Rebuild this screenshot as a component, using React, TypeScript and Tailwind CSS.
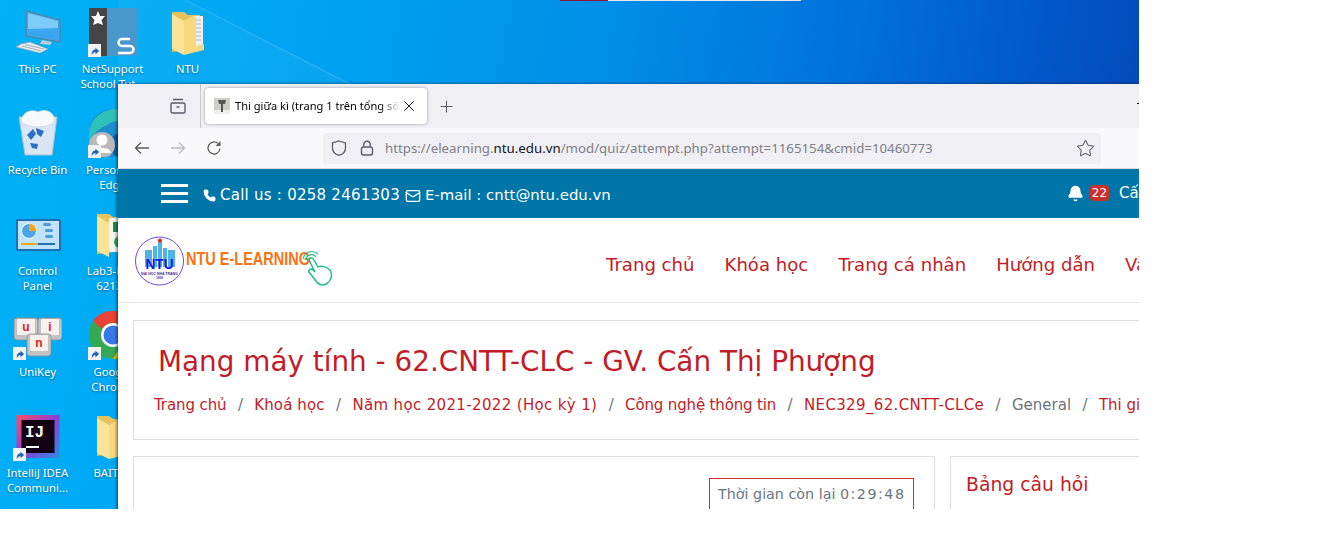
import type { ReactNode } from "react";
import { Bell, Mail, Phone, Star, X, Plus } from "lucide-react";

const sysFont = "font-['Noto_Sans','Open_Sans',sans-serif]";
const siteFont = "font-['DejaVu_Sans',Verdana,sans-serif]";

function Shortcut() {
  return (
    <svg viewBox="0 0 14 14" className="absolute left-[-1px] bottom-[-1px] w-[13px] h-[13px]">
      <rect width="14" height="14" fill="#f0f2f4" />
      <path d="M4 12 C4 8 5 6 8 6 L8 4 L12 7.5 L8 11 L8 8.5 C6.500 8.500 5.500 9.500 4 12Z" fill="#1f62b5" />
    </svg>
  );
}

function Folder() {
  return (
    <svg viewBox="0 0 48 48" className="w-12 h-12">
      <path d="M8 4 L20 4 L24 7 L36 7 L36 40 L8 44Z" fill="#e6c25c" />
      <rect x="29" y="8" width="10" height="34" fill="#eef0ee" />
      <path d="M31 12 h6 M31 16 h6 M31 20 h6 M31 24 h6 M31 28 h6 M31 32 h6" stroke="#a9b8c4" strokeWidth="1.200" />
      <path d="M8 6 L20 13 L20 47 L8 41Z" fill="#fbe296" />
      <path d="M20 13 L27 9 L32 9 L32 38 L40 36 L40 42 L20 47Z" fill="#f8d97f" />
    </svg>
  );
}

function ThisPcIcon() {
  return (
    <svg viewBox="0 0 48 48" className="w-12 h-12">
      <path d="M12 3 L46 12 L46 34 L12 28Z" fill="#3aa6f0" stroke="#6a7a86" strokeWidth="1" />
      <path d="M14 5 L44 13 L44 20 L14 21Z" fill="#7fcbf8" />
      <path d="M28 32 L38 34 L36 37 L26 36Z" fill="#c2cad0" />
      <path d="M16 34 L34 41 L26 45 L2 39 L7 36Z" fill="#e8ebee" stroke="#97a1a8" strokeWidth="0.600" />
      <path d="M8 38 L27 43 M11 36.500 L30 41" stroke="#97a1a8" strokeWidth="0.800" />
    </svg>
  );
}

function NetSupportIcon() {
  return (
    <svg viewBox="0 0 48 48" className="w-12 h-12">
      <rect x="0" y="0" width="18" height="48" fill="#454545" />
      <rect x="18" y="0" width="30" height="48" fill="#4a97cc" />
      <path d="M9 3 L11 8 L16 8 L12.500 12 L14 17 L9 15 L4 17 L5.500 12 L2 8 L7 8Z" fill="#fff" />
      <path d="M41 31 H33 a3.500 3.500 0 0 0 0 7 H41 a3.500 3.500 0 0 1 0 7 H29" fill="none" stroke="#fff" strokeWidth="2.500" />
    </svg>
  );
}

function BinIcon() {
  return (
    <svg viewBox="0 0 48 48" className="w-12 h-12">
      <path d="M5 8 L43 8 L38 46 L11 46Z" fill="#d7e6f2" stroke="#aebfcc" strokeWidth="1" />
      <path d="M7 12 C9 2 18 0 24 3 C32 -1 40 3 41 12 C34 20 14 20 7 12Z" fill="#f7f8f9" stroke="#d0d6da" strokeWidth="0.800" />
      <path d="M13 26 L19 20 L22 25 L17 31Z M22 19 L30 22 L27 28 L23 25Z M16 34 L24 35 L23 40 L18 39Z" fill="#2a6fc4" />
    </svg>
  );
}

function EdgeIcon() {
  return (
    <svg viewBox="0 0 48 48" className="w-12 h-12">
      <circle cx="24" cy="24" r="24" fill="#1b8ecb" />
      <path d="M0 24 C2 6 18 0 26 0 C40 0 48 12 48 22 C40 10 26 10 18 16 C10 20 4 24 0 34Z" fill="#2fc1b8" />
      <circle cx="34" cy="36" r="13" fill="#0b5ea8" />
      <circle cx="13" cy="36" r="13" fill="#b9b9b9" />
      <circle cx="13" cy="31" r="5.500" fill="#fff" />
      <path d="M4 44 C5 37 21 37 22 44 Z" fill="#fff" />
    </svg>
  );
}

function LabFolder() {
  return (
    <svg viewBox="0 0 48 48" className="w-12 h-12">
      <path d="M8 4 L20 4 L24 7 L42 7 L42 40 L8 44Z" fill="#e6c25c" />
      <rect x="20" y="8" width="24" height="34" fill="#f4f5ef" />
      <rect x="24" y="12" width="10" height="10" fill="#1e8e4e" />
      <rect x="25" y="26" width="12" height="12" rx="6" fill="#3aa655" />
      <path d="M8 6 L20 13 L20 47 L8 41Z" fill="#fbe296" />
    </svg>
  );
}

function ControlPanelIcon() {
  return (
    <svg viewBox="0 0 48 48" className="w-12 h-12">
      <rect x="2" y="9" width="45" height="32" rx="1.500" fill="#1f6fb5" />
      <rect x="4" y="11" width="41" height="28" fill="#bfe3f8" />
      <circle cx="15" cy="21" r="7.500" fill="#4aa6e8" stroke="#fff" />
      <path d="M15 13.500 A7.500 7.500 0 0 1 22.500 21 L15 21Z" fill="#f5a623" />
      <rect x="29" y="13" width="8" height="3" rx="1.500" fill="#4f9ad8" />
      <rect x="31" y="19" width="8" height="3" rx="1.500" fill="#4f9ad8" />
      <rect x="31" y="25" width="8" height="3" rx="1.500" fill="#4f9ad8" />
      <rect x="7" y="33" width="17" height="2" fill="#f5a623" />
      <rect x="24" y="33" width="17" height="2" fill="#1f6fb5" />
    </svg>
  );
}

function UniKeyIcon() {
  const key = (x: number, y: number, c: string) => (
    <g>
      <rect x={x} y={y} width="24" height="22" rx="3" fill="#c2c2c2" stroke="#8a8a8a" strokeWidth="0.700" />
      <rect x={x + 3} y={y + 1} width="18" height="16" rx="1" fill="#f6f0ee" />
      <text x={x + 12} y={y + 13} textAnchor="middle" fontSize="12" fontWeight="700" fontFamily="Liberation Sans" fill="#e02020">{c}</text>
    </g>
  );
  return (
    <svg viewBox="0 0 48 48" className="w-12 h-12">
      {key(0, 7, "u")}
      {key(24, 7, "i")}
      {key(13, 23, "n")}
    </svg>
  );
}

function ChromeIcon() {
  return (
    <svg viewBox="0 0 48 48" className="w-12 h-12">
      <circle cx="24" cy="24" r="24" fill="#34a853" />
      <path d="M24 0 A24 24 0 0 1 45 12 L24 12 A12 12 0 0 0 13 18 L4 10 A24 24 0 0 1 24 0Z" fill="#ea4335" />
      <path d="M45 12 A24 24 0 0 1 24 48 L35 30 A12 12 0 0 0 34 14Z" fill="#fbbc05" />
      <circle cx="24" cy="24" r="12" fill="#fff" />
      <circle cx="24" cy="24" r="9.500" fill="#3b78e7" />
    </svg>
  );
}

function IntellijIcon() {
  return (
    <svg viewBox="0 0 48 48" className="w-12 h-12">
      <defs>
        <linearGradient id="ijg" x1="0" y1="0" x2="1" y2="1">
          <stop offset="0" stopColor="#ff4d5e" />
          <stop offset="0.500" stopColor="#8a3fd8" />
          <stop offset="1" stopColor="#2f8de0" />
        </linearGradient>
      </defs>
      <rect x="2.500" y="3" width="43" height="43" fill="url(#ijg)" />
      <rect x="7.500" y="8" width="33" height="33" fill="#120214" />
      <text x="11" y="25" fontSize="16" fontWeight="700" fontFamily="Liberation Mono" fill="#fff">IJ</text>
      <rect x="12" y="34" width="13" height="2" fill="#fff" />
    </svg>
  );
}

function DesktopIcon({ label, icon, shortcut }: { label: string; icon: ReactNode; shortcut?: boolean }) {
  return (
    <div className="flex flex-col items-center pt-2">
      <div className="relative w-12 h-12">
        {icon}
        {shortcut && <Shortcut />}
      </div>
      <div className={`${sysFont} mt-[5px] w-[68px] text-center text-[11.300px] leading-[15px] text-white [text-shadow:0_1px_2px_rgba(0,0,0,0.45)]`}>
        {label}
      </div>
    </div>
  );
}

function Logo() {
  return (
    <svg viewBox="0 0 200 52" className="w-[200px] h-[52px]">
      <circle cx="24.500" cy="25" r="24" fill="#fff" stroke="#7048e8" strokeWidth="1" />
      <rect x="10" y="14" width="7" height="17" fill="#4fb3e8" />
      <rect x="18" y="10" width="4" height="21" fill="#4fb3e8" />
      <rect x="23" y="6" width="4" height="25" fill="#4fb3e8" />
      <rect x="28" y="12" width="4" height="19" fill="#4fb3e8" />
      <rect x="33" y="14" width="7" height="17" fill="#4fb3e8" />
      <path d="M25 1.500 l1 2 2 0 -1.500 1.500 .5 2 -2 -1 -2 1 .5 -2 -1.500 -1.500 2 0Z" fill="#e02020" />
      <text x="24.500" y="33" textAnchor="middle" fontSize="14" fontWeight="700" fontFamily="Liberation Sans" fill="#1a1ad8" textLength="28" lengthAdjust="spacingAndGlyphs">NTU</text>
      <text x="24.500" y="38.500" textAnchor="middle" fontSize="3.500" fontWeight="700" fontFamily="Liberation Sans" fill="#3a2aa0">ĐẠI HỌC NHA TRANG</text>
      <text x="24.500" y="43" textAnchor="middle" fontSize="3" fontWeight="700" fontFamily="Liberation Sans" fill="#3a2aa0">1959</text>
      <text x="51" y="29" fontSize="19" fontWeight="700" fontFamily="Liberation Sans" fill="#f97316" textLength="124" lengthAdjust="spacingAndGlyphs">NTU E-LEARNING</text>
      <path d="M174 24 C174 21 178 21 179 24 L183 31 C186 29 192 31 195 34 C198 39 196 45 192 47.500 C188 50 184 49 181 45 L174 36 C173 34 176 32 178 34 L180 36 Z" fill="#fff" stroke="#1fbf8f" strokeWidth="1.500" />
      <path d="M171 24 A5.500 5.500 0 0 1 181 21" fill="none" stroke="#1fbf8f" strokeWidth="1.200" />
      <path d="M168 23 A9 9 0 0 1 183 18" fill="none" stroke="#1fbf8f" strokeWidth="1.200" />
    </svg>
  );
}

const navItems = ["Trang chủ", "Khóa học", "Trang cá nhân", "Hướng dẫn", "Vài"];
const crumbs = [
  { text: "Trang chủ", cls: "tracking-[-0.1px]" },
  { text: "Khoá học", cls: "tracking-[0.1px]" },
  { text: "Năm học 2021-2022 (Học kỳ 1)", cls: "tracking-[0.35px]" },
  { text: "Công nghệ thông tin", cls: "tracking-[-0.15px]" },
  { text: "NEC329_62.CNTT-CLCe", cls: "tracking-[0.35px]" },
  { text: "General", cls: "text-[#6c757d]" },
  { text: "Thi giữa kì", cls: "" },
];

function BrowserWindow() {
  return (
    <div className="absolute left-[118px] top-[84px] w-[1240px] h-[470px] flex flex-col bg-white shadow-[-1px_0_3px_rgba(0,0,0,0.6)]">
      {/* tab strip */}
      <div className="relative h-11 flex items-center bg-[#f0f0f4] shrink-0">
        <div className="w-[83px] h-11 flex items-center justify-end pr-[14px] border-r border-[#c8c8cc]">
          <svg viewBox="0 0 16 16" className="w-4 h-4" fill="none" stroke="#5b5b66" strokeWidth="1.400">
            <rect x="1" y="5" width="14" height="10" rx="1.500" />
            <path d="M3 1.500 H13 M6.500 9 H9.500" />
          </svg>
        </div>
        <div className={`${sysFont} ml-[4px] w-[222px] h-9 flex items-center pl-[9px] bg-white rounded shadow-[0_0_3px_rgba(0,0,0,0.4)]`}>
          <svg viewBox="0 0 16 16" className="w-4 h-4 shrink-0">
            <rect width="16" height="16" fill="#cfcfca" />
            <rect y="12" width="16" height="4" fill="#eeeeea" />
            <path d="M4 2 H12 L11 6 H9 V14 H7 V6 H5Z" fill="#555" />
          </svg>
          <div className="ml-[5px] w-[165px] overflow-hidden whitespace-nowrap text-[11.100px] text-black [mask-image:linear-gradient(to_right,black_88%,transparent)]">
            Thi giữa kì (trang 1 trên tổng số 1)
          </div>
          <X className="w-[18px] h-[18px] text-[#15141a]" strokeWidth={1.300} />
        </div>
        <Plus className="ml-[10px] w-[19px] h-[19px] text-[#5b5b66]" strokeWidth={1.300} />
        <div className="absolute left-[1019px] top-[19px] w-[10px] h-px bg-[#15141a]" />
      </div>
      {/* address bar */}
      <div className="h-[41px] flex items-center bg-[#f9f9fb] border-b border-[#d8d8dc] shrink-0 pl-[16px]">
        <svg viewBox="0 0 16 16" className="w-4 h-4" fill="none" stroke="#5b5b66" strokeWidth="1.300">
          <path d="M1.500 8 H15 M7 2.500 L1.500 8 L7 13.500" />
        </svg>
        <svg viewBox="0 0 16 16" className="ml-[20px] w-4 h-4" fill="none" stroke="#b8b8be" strokeWidth="1.300">
          <path d="M14.500 8 H1 M9 2.500 L14.500 8 L9 13.500" />
        </svg>
        <svg viewBox="0 0 16 16" className="ml-[20px] w-4 h-4" fill="none" stroke="#5b5b66" strokeWidth="1.300">
          <path d="M14 8.500 A6 6 0 1 1 11.800 3.300" />
          <path d="M14.500 1 V6 H9.500Z" fill="#5b5b66" stroke="none" />
        </svg>
        <div className="ml-[101px] w-[778px] h-[31px] flex items-center pl-[8px] rounded bg-[#f0f0f4]">
          <svg viewBox="0 0 16 16" className="w-4 h-4" fill="none" stroke="#5b5b66" strokeWidth="1.300">
            <path d="M8 1 L14.500 3 V8 C14.500 12 11 14.500 8 15.300 C5 14.500 1.500 12 1.500 8 V3Z" />
          </svg>
          <svg viewBox="0 0 16 16" className="ml-[12px] w-4 h-4" fill="none" stroke="#5b5b66" strokeWidth="1.400">
            <rect x="2.500" y="7" width="11" height="8" rx="2" />
            <path d="M4.800 7 V4.500 a3.200 3.200 0 0 1 6.400 0 V7" />
          </svg>
          <div className={`${sysFont} ml-[10px] mt-[1px] whitespace-nowrap text-[13.270px] text-[#7f7f86]`}>
            https://elearning.<span className="text-[#15141a]">ntu.edu.vn</span>/mod/quiz/attempt.php?attempt=1165154&amp;cmid=10460773
          </div>
          <Star className="ml-auto mr-[6px] w-[19px] h-[19px] text-[#5b5b66]" strokeWidth={1.300} />
        </div>
      </div>
      {/* site top bar */}
      <div className={`${siteFont} h-[49px] flex items-center pl-[43px] bg-[#0075a8] text-white shrink-0`}>
        <div className="w-[27px] flex flex-col gap-[5px]">
          <div className="h-[3px] bg-white" />
          <div className="h-[3px] bg-white" />
          <div className="h-[3px] bg-white" />
        </div>
        <div className="mt-[4px] flex items-center">
          <Phone className="ml-[15px] w-[13px] h-[13px] fill-white" />
          <span className="ml-[4px] text-[15px] tracking-[0.25px]">Call us : 0258 2461303</span>
          <Mail className="ml-[5px] w-[16px] h-[16px]" />
          <span className="ml-[4px] w-[187px] text-[14.900px] whitespace-nowrap">E-mail : cntt@ntu.edu.vn</span>
        </div>
        <div className="ml-[455px] flex items-center mt-[-1px]">
          <Bell className="w-[17px] h-[17px] fill-white" />
          <span className="ml-[6px] w-[19px] h-[16px] flex items-center justify-center rounded-sm bg-[#c9302c] text-[12px]">22</span>
          <span className="ml-[10px] text-[15px] whitespace-nowrap">Cấn Thị Phượng</span>
        </div>
      </div>
      {/* site header */}
      <div className={`${siteFont} h-[85px] flex items-center pl-[17px] border-b border-[#e4e4e4] shrink-0`}>
        <div className="mt-[4px]">
          <Logo />
        </div>
        <nav className="ml-[271px] mt-[10px] flex gap-[30px] text-[18.100px] text-[#c21c28] whitespace-nowrap">
          {navItems.map((n) => (
            <span key={n}>{n}</span>
          ))}
        </nav>
      </div>
      {/* page */}
      <div className={`${siteFont} flex flex-col gap-[16px] pt-[17px] pl-[15px]`}>
        <div className="h-[120px] w-[1200px] border border-[#e0e0e0] pl-[20px] pt-[21px]">
          <h1 className="pl-[4px] text-[27.850px] leading-[40px] text-[#c21c28] whitespace-nowrap">
            Mạng máy tính - 62.CNTT-CLC - GV. Cấn Thị Phượng
          </h1>
          <div className="mt-[12px] flex text-[15px] text-[#c21c28] whitespace-nowrap">
            {crumbs.map((c, i) => (
              <span key={c.text} className="flex">
                {i > 0 && <span className="mx-[11.400px] text-[#6c757d]">/</span>}
                <span className={c.cls}>{c.text}</span>
              </span>
            ))}
          </div>
        </div>
        <div className="flex gap-[15px]">
          <div className="w-[802px] h-[100px] border border-[#e0e0e0] flex justify-end pt-[21px] pr-[20px]">
            <div className="w-[205px] h-[36px] pl-[8px] pt-[5px] border border-[#c9302c] text-[14.300px] text-[#6c757d] whitespace-nowrap">
              Thời gian còn lại <span className="tracking-[1.500px]">0:29:48</span>
            </div>
          </div>
          <div className="w-[300px] h-[100px] border border-[#e0e0e0] pl-[15px] pt-[14px] text-[18.800px] text-[#c21c28]">
            Bảng câu hỏi
          </div>
        </div>
      </div>
    </div>
  );
}

export default function App() {
  return (
    <div className="w-[1338px] h-[548px] bg-white overflow-hidden">
      <div className="relative w-[1139px] h-[509px] overflow-hidden bg-[linear-gradient(100deg,#00b2f7_0%,#00a0f0_30%,#008ee8_50%,#0072da_70%,#0258c8_85%,#0342b6_100%)]">
        <svg viewBox="0 0 1139 90" className="absolute left-0 top-0 w-[1139px] h-[90px]">
          <path d="M185 0 L350 84 L118 84 L118 0Z" fill="#fff" fillOpacity="0.04" />
          <path d="M185 0 L350 84" stroke="#5cc4ff" strokeOpacity="0.35" strokeWidth="1.500" />
        </svg>
        <div className="absolute left-[560px] top-0 w-[48px] h-px bg-[#8a1538]" />
        <div className="absolute left-[608px] top-0 w-[193px] h-px bg-[#e8e8e8]" />
        <div className="relative grid grid-flow-col grid-rows-[repeat(5,101px)] auto-cols-[75px]">
          <DesktopIcon label="This PC" icon={<ThisPcIcon />} />
          <DesktopIcon label="Recycle Bin" icon={<BinIcon />} />
          <DesktopIcon label="Control Panel" icon={<ControlPanelIcon />} />
          <DesktopIcon label="UniKey" icon={<UniKeyIcon />} shortcut />
          <DesktopIcon label="IntelliJ IDEA Communi..." icon={<IntellijIcon />} shortcut />
          <DesktopIcon label="NetSupport School Tut..." icon={<NetSupportIcon />} shortcut />
          <DesktopIcon label="Personal - Edge" icon={<EdgeIcon />} shortcut />
          <DesktopIcon label="Lab3-NEC 62132" icon={<LabFolder />} />
          <DesktopIcon label="Google Chrome" icon={<ChromeIcon />} shortcut />
          <DesktopIcon label="BAITAP" icon={<Folder />} />
          <DesktopIcon label="NTU" icon={<Folder />} />
        </div>
        <BrowserWindow />
      </div>
    </div>
  );
}
